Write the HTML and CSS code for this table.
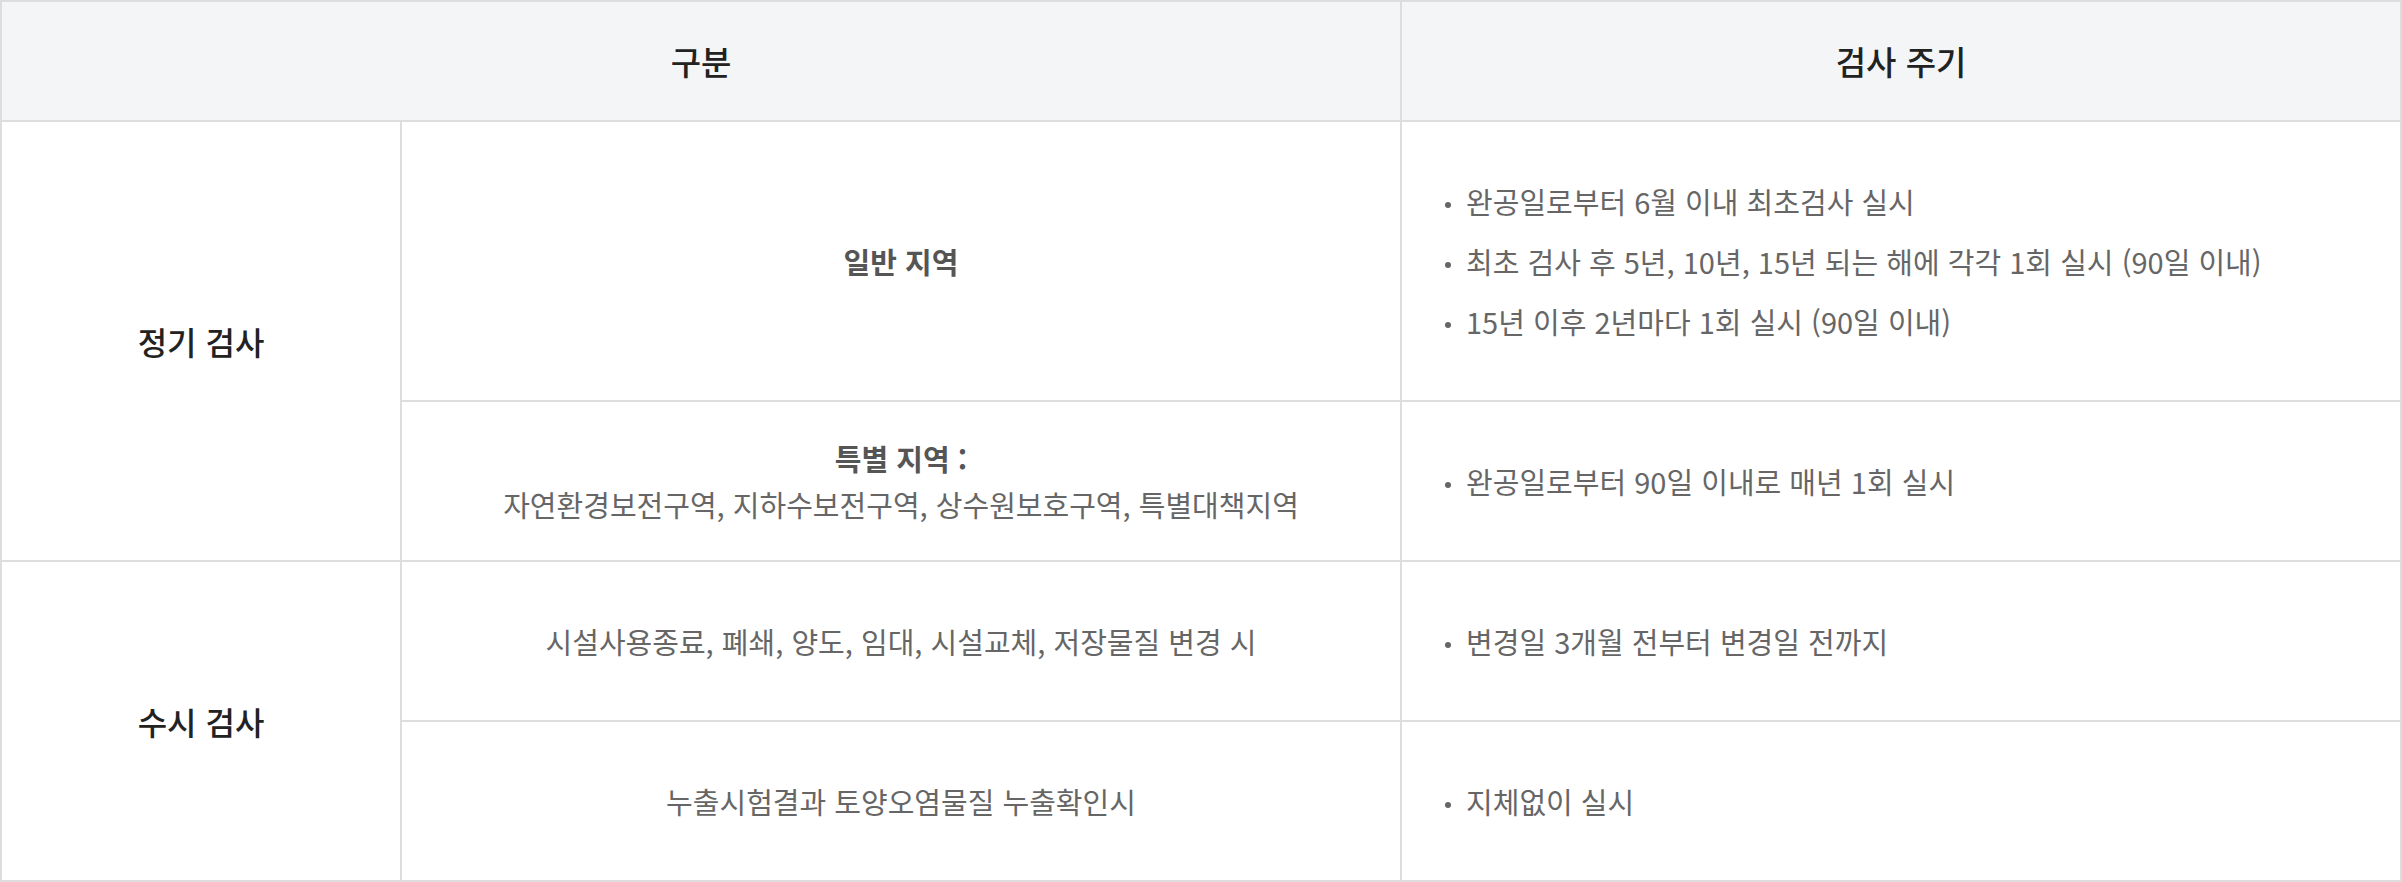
FILE: index.html
```html
<!DOCTYPE html>
<html lang="ko">
<head>
  <meta charset="UTF-8">
  <title>토양오염 검사 주기</title>
  <meta name="viewport" content="width=device-width, initial-scale=1.0">
  <link rel="stylesheet" href="styles.css">
</head>
<body>

<table class="cycle">
  <colgroup>
    <col class="col-kind">
    <col class="col-area">
    <col class="col-term">
  </colgroup>
  <thead>
    <tr class="row-head">
      <th colspan="2">구분</th>
      <th>검사 주기</th>
    </tr>
  </thead>
  <tbody>
    <tr class="row-tall">
      <th rowspan="2" class="kind">정기 검사</th>
      <td class="area"><strong>일반 지역</strong></td>
      <td class="term">
        <ul>
          <li>완공일로부터 6월 이내 최초검사 실시</li>
          <li>최초 검사 후 5년, 10년, 15년 되는 해에 각각 1회 실시 (90일 이내)</li>
          <li>15년 이후 2년마다 1회 실시 (90일 이내)</li>
        </ul>
      </td>
    </tr>
    <tr class="row">
      <td class="area">
        <strong>특별 지역 :</strong><br>
        자연환경보전구역, 지하수보전구역, 상수원보호구역, 특별대책지역
      </td>
      <td class="term">
        <ul>
          <li>완공일로부터 90일 이내로 매년 1회 실시</li>
        </ul>
      </td>
    </tr>
    <tr class="row">
      <th rowspan="2" class="kind">수시 검사</th>
      <td class="area">시설사용종료, 폐쇄, 양도, 임대, 시설교체, 저장물질 변경 시</td>
      <td class="term">
        <ul>
          <li>변경일 3개월 전부터 변경일 전까지</li>
        </ul>
      </td>
    </tr>
    <tr class="row">
      <td class="area">누출시험결과 토양오염물질 누출확인시</td>
      <td class="term">
        <ul>
          <li>지체없이 실시</li>
        </ul>
      </td>
    </tr>
  </tbody>
</table>

</body>
</html>
```

FILE: styles.css
```css
body {
  margin: 0;
  background: #fff;
  font-family: "Noto Sans CJK KR", "Noto Sans", sans-serif;
}
.cycle {
  width: 2402px;
  table-layout: fixed;
  border-collapse: separate;
  border-spacing: 0;
  border-top: 2px solid #dddddd;
  border-left: 2px solid #dddddd;
}
.col-kind {
  width: 400px;
}
.col-area {
  width: 1000px;
}
.col-term {
  width: 1000px;
}
.cycle th,
.cycle td {
  box-sizing: border-box;
  padding: 0;
  border-right: 2px solid #dddddd;
  border-bottom: 2px solid #dddddd;
  vertical-align: middle;
}
.row-head th {
  height: 120px;
  background: #f4f5f7;
  color: #222;
  font-size: 33px;
  font-weight: 500;
  text-align: center;
}
.row-tall td {
  height: 280px;
}
.row td {
  height: 160px;
}
.kind {
  color: #222;
  font-size: 32px;
  font-weight: 500;
  text-align: center;
}
.area {
  text-align: center;
  color: #666;
  font-size: 29px;
  line-height: 46px;
}
.area strong {
  color: #555;
  font-weight: 700;
}
.term {
  color: #666;
  font-size: 29px;
}
.term ul {
  list-style: none;
  margin: 0;
  padding: 0 0 0 43px;
}
.term li {
  line-height: 46px;
}
.term li + li {
  margin-top: 14px;
}
.term li::before {
  content: "";
  display: inline-block;
  width: 6px;
  height: 6px;
  margin-right: 15px;
  border-radius: 50%;
  background: #666;
  vertical-align: 6px;
}
```
